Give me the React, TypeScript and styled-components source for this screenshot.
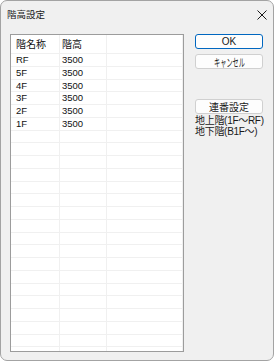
import React from "react";
import styled, { createGlobalStyle } from "styled-components";

const GlobalStyle = createGlobalStyle`
  html, body {
    margin: 0;
    padding: 0;
    background: #ffffff;
  }
  body {
    font-family: "Liberation Sans", "Noto Sans CJK JP", sans-serif;
  }
`;

interface IFloor {
  name: string;
  height: string;
}

const floors: IFloor[] = [
  { name: "RF", height: "3500" },
  { name: "5F", height: "3500" },
  { name: "4F", height: "3500" },
  { name: "3F", height: "3500" },
  { name: "2F", height: "3500" },
  { name: "1F", height: "3500" },
];

const TOTAL_ROWS = 24;

const CloseIcon = () => (
  <svg width="10" height="10" viewBox="0 0 10 10">
    <path d="M0.5 0.5 L9.5 9.5 M9.5 0.5 L0.5 9.5" stroke="#1a1a1a" strokeWidth="1" fill="none" />
  </svg>
);

export default function App() {
  const rows: IFloor[] = [...floors];
  while (rows.length < TOTAL_ROWS) rows.push({ name: "", height: "" });

  return (
    <>
      <GlobalStyle />
      <Window>
        <TitleBar>
          <Title>階高設定</Title>
          <CloseButton>
            <CloseIcon />
          </CloseButton>
        </TitleBar>
        <Body>
          <ListBox>
            <HeaderRow>
              <Cell $width={49} $pad={5}>階名称</Cell>
              <Cell $width={47} $pad={2}>階高</Cell>
              <Cell />
            </HeaderRow>
            {rows.map((r, i) => (
              <Row key={i}>
                <Cell $width={49} $pad={5}>{r.name}</Cell>
                <Cell $width={47} $pad={2}>{r.height}</Cell>
                <Cell />
              </Row>
            ))}
          </ListBox>
          <SidePanel>
            <Button $primary>OK</Button>
            <Button>
              <Narrow>キャンセル</Narrow>
            </Button>
            <Button $spaced>連番設定</Button>
            <Note>
              地上階(1F～RF)
              <br />
              地下階(B1F～)
            </Note>
          </SidePanel>
        </Body>
      </Window>
    </>
  );
}

const Window = styled.div`
  width: 274px;
  height: 361px;
  box-sizing: border-box;
  border: 1px solid #a3a3a3;
  border-radius: 7px;
  background: #f0f0f0;
  display: flex;
  flex-direction: column;
  overflow: hidden;
`;

const TitleBar = styled.div`
  height: 28px;
  flex-shrink: 0;
  display: flex;
  align-items: center;
  justify-content: space-between;
  padding: 0 6px 2px 6px;
  box-sizing: border-box;
`;

const Title = styled.span`
  font-size: 9.5px;
  color: #1a1a1a;
`;

const CloseButton = styled.span`
  display: flex;
  margin-top: 1px;
`;

const Body = styled.div`
  flex: 1;
  display: flex;
  align-items: flex-start;
  gap: 11px;
  padding: 5px 0 8px 9px;
  min-height: 0;
`;

const ListBox = styled.div`
  width: 174px;
  height: 318px;
  box-sizing: border-box;
  border: 1px solid #9c9c9c;
  background: #ffffff;
  overflow: hidden;
  display: flex;
  flex-direction: column;
`;

const Row = styled.div`
  display: flex;
  height: 12.75px;
  flex-shrink: 0;
  box-sizing: border-box;
  border-bottom: 1px solid #f0f0f0;
  font-size: 9.5px;
  line-height: 11.75px;
  color: #111111;
`;

const HeaderRow = styled(Row)`
  height: 19px;
  line-height: 19px;
  font-size: 10px;
`;

const Cell = styled.div<{ $width?: number; $pad?: number }>`
  ${(p) => (p.$width ? `width: ${p.$width}px;` : "flex: 1;")}
  flex-shrink: 0;
  box-sizing: border-box;
  padding-left: ${(p) => p.$pad ?? 0}px;
  border-right: 1px solid #f0f0f0;
  white-space: nowrap;
  overflow: hidden;
`;

const SidePanel = styled.div`
  width: 68px;
  display: flex;
  flex-direction: column;
  gap: 5px;
`;

const Button = styled.div<{ $primary?: boolean; $spaced?: boolean }>`
  height: 15px;
  box-sizing: border-box;
  border: 1px solid ${(p) => (p.$primary ? "#0067c0" : "#d0d0d0")};
  border-radius: 3px;
  background: #fdfdfd;
  display: flex;
  align-items: center;
  justify-content: center;
  font-size: 10px;
  color: #1a1a1a;
  margin-top: ${(p) => (p.$spaced ? "25px" : "0")};
`;

const Narrow = styled.span`
  display: inline-block;
  font-size: 11px;
  transform: scaleX(0.56);
  white-space: nowrap;
`;

const Note = styled.div`
  margin-top: -4px;
  font-size: 10px;
  line-height: 11px;
  color: #1a1a1a;
  white-space: nowrap;
  letter-spacing: -0.3px;
`;
